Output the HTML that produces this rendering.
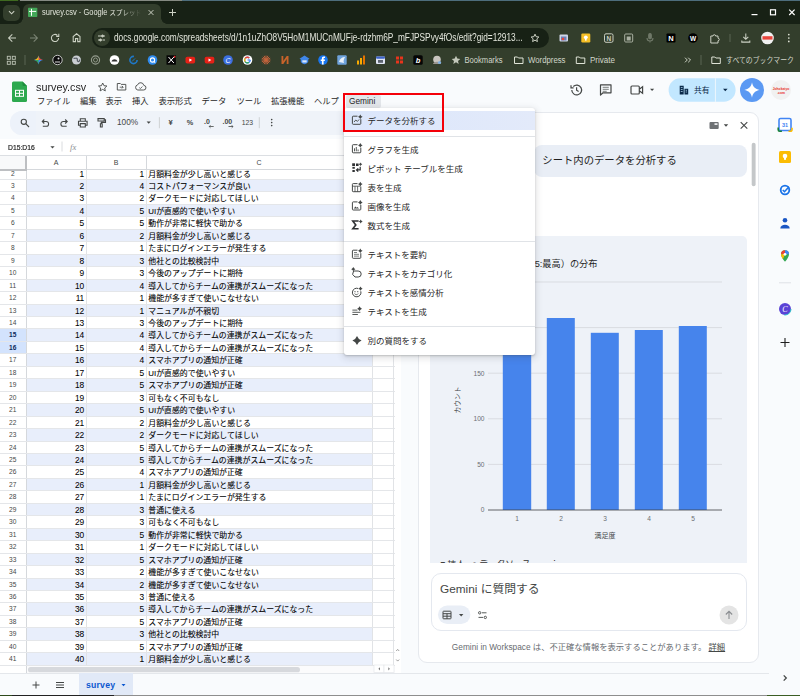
<!DOCTYPE html>
<html lang="ja">
<head>
<meta charset="utf-8">
<title>survey.csv - Google スプレッドシート</title>
<style>
*{box-sizing:border-box;margin:0;padding:0}
html,body{width:800px;height:696px;overflow:hidden;background:#f9fbfd}
body{font-family:"Liberation Sans","Noto Sans CJK JP",sans-serif;color:#1f1f1f;position:relative}
.abs{position:absolute}
svg{display:block;overflow:visible}
/* ---------- browser chrome ---------- */
#chrome{position:absolute;left:0;top:0;width:800px;height:72px;background:#333e2c}
#tabstrip{position:absolute;left:0;top:0;width:800px;height:24px;background:#172115}
#topline{position:absolute;left:0;top:0;width:800px;height:1px;background:linear-gradient(90deg,#3f6a20 0,#3f6a20 18px,#1f2a19 18px,#1f2a19 20px,#858a82 20px,#858a82 182px,#4d6d7c 182px)}
#tabsearch{position:absolute;left:3px;top:4.5px;width:16.5px;height:16px;border-radius:5px;background:#333e2c}
#tab{position:absolute;left:23px;top:4px;width:138px;height:20px;background:#333e2c;border-radius:6px 6px 0 0}
#tab:before,#tab:after{content:"";position:absolute;bottom:0;width:6px;height:6px;background:radial-gradient(circle at 0 0,transparent 5.5px,#333e2c 6px)}
#tab:before{left:-6px}
#tab:after{right:-6px;background:radial-gradient(circle at 100% 0,transparent 5.5px,#333e2c 6px)}
#tabtitle{position:absolute;left:42px;top:6px;width:114px;height:12px;transform:scaleX(0.87);transform-origin:0 0;font-size:8.6px;line-height:12px;color:#e3e6dc;white-space:nowrap;overflow:hidden;-webkit-mask-image:linear-gradient(90deg,#000 80%,transparent 100%)}
#omni{position:absolute;left:92px;top:28px;width:456.5px;height:20px;border-radius:10px;background:#172115}
#omnichip{position:absolute;left:93.5px;top:30px;width:16px;height:16px;border-radius:8px;background:#333e2c}
#url{position:absolute;left:114px;top:31px;font-size:10.2px;line-height:14px;color:#e3e6dc;white-space:nowrap;transform:scaleX(0.814);transform-origin:0 0}
.bm{position:absolute;top:54px;font-size:8.3px;line-height:12px;color:#dfe3d6;white-space:nowrap}
/* ---------- sheets header ---------- */
#title{position:absolute;left:36px;top:78.5px;font-size:11.8px;line-height:16px;transform:scaleX(0.915);transform-origin:0 0;color:#1f1f1f;white-space:nowrap}
.menu{position:absolute;top:94.5px;font-size:8.3px;line-height:13px;color:#1f1f1f;white-space:nowrap}
#gembtn{position:absolute;left:346px;top:95px;width:35px;height:12.5px;background:#e3e6ea;border-radius:2px}
#toolbar{position:absolute;left:9.5px;top:111px;width:396px;height:23.5px;background:#eff3f9;border-radius:12px}
#tbsearch{position:absolute;left:9.5px;top:111px;width:26px;height:23.5px;background:#edf2fa;border-radius:12px 0 0 12px}
.tbt{position:absolute;font-size:8.2px;line-height:12px;color:#444746;white-space:nowrap}
#fbar{position:absolute;left:0;top:138.5px;width:395px;height:17.5px;background:#fff;border-bottom:1px solid #dcdfe3}
#namebox{position:absolute;left:8px;top:141.5px;transform:scaleX(0.88);transform-origin:0 0;font-size:7.7px;-webkit-text-stroke:0.2px #1f1f1f;line-height:11px;color:#1f1f1f;white-space:nowrap}
/* ---------- grid ---------- */
#grid{position:absolute;left:0;top:156px;width:395px;height:510px;background:#fff;overflow:hidden}
#colhdr{position:absolute;left:0;top:156px;width:395px;height:14px;background:#fff;border-bottom:1px solid #d5d8dc}
.ch{position:absolute;top:0;height:14px;font-size:7px;line-height:14px;text-align:center;color:#444746;border-right:1px solid #d5d8dc}
#corner{position:absolute;left:0;top:156px;width:26.5px;height:14.5px;background:#f8f9fa;border-right:2px solid #bdbfc2;border-bottom:2px solid #bdbfc2}
.r{position:absolute;left:0;width:394.5px;height:12.455px;font-size:7.9px;line-height:13.4px;color:#000;white-space:nowrap;border-bottom:1px solid #e4e6e9}
.r.band{background:linear-gradient(90deg,#fff 0,#fff 26.5px,#e8eefb 26.5px,#e8eefb 372.8px,#fff 372.8px)}
.r span{position:absolute;top:0;height:100%}
.rh{left:0;width:26.5px;text-align:center;font-size:6.6px;line-height:11.8px;color:#444746;border-right:1px solid #d5d8dc;background:#fff}
.sel .rh{background:#d3e3fd;font-weight:bold;color:#0b2a5c}
.ca{left:26.5px;width:60px;text-align:right;padding-right:1.8px;border-right:1px solid #e1e3e6}
.cb{left:86.5px;width:60px;text-align:right;padding-right:1.8px;border-right:1px solid #e1e3e6}
.cc{left:146.5px;width:226.3px;padding-left:1.8px;border-right:1px solid #e1e3e6;-webkit-text-stroke:0.08px #000}
.ca,.cb{-webkit-text-stroke:0.05px #000;font-size:8.4px;letter-spacing:-0.35px;line-height:12.9px}
#cold{position:absolute;left:372.8px;top:170px;width:21.6px;height:496px;border-right:1px solid #e1e3e6}
/* ---------- bottom ---------- */
#vscroll{position:absolute;left:394.5px;top:156px;width:6.2px;height:517px;background:#fff}
#hscroll{position:absolute;left:0;top:665.5px;width:395px;height:7.5px;background:linear-gradient(90deg,#fff 0,#fff 26px,#d5d8dc 26px,#d5d8dc 27px,#fbfbfc 27px)}
#bottombar{position:absolute;left:0;top:673px;width:769px;height:23px;background:#f9fbfd;border-top:1px solid #e4e7eb}
#botline{position:absolute;left:0;top:694.6px;width:800px;height:1.4px;background:linear-gradient(90deg,#2e4a1c 0,#2e4a1c 12px,#222 12px,#222 114px,#8e8e8e 114px,#8e8e8e 767px,#3c5e24 767px)}
#sheettab{position:absolute;left:79px;top:673px;width:54px;height:22px;background:#e1e9f7}
/* ---------- dropdown ---------- */
#dd{position:absolute;left:344px;top:108px;width:190.5px;height:247px;background:#fff;border-radius:3px;box-shadow:0 1px 2px rgba(60,64,67,.26),0 2px 6px 2px rgba(60,64,67,.13)}
.mi{position:absolute;left:0;width:190.5px;height:19px;font-size:8.5px;line-height:19px;color:#1f1f1f;white-space:nowrap;padding-left:23.5px}
.mi.hl{background:linear-gradient(90deg,#dbe6fb,#e3eafa)}
.msep{position:absolute;left:0;width:190.5px;height:1px;background:#e0e3e7}
.mic{position:absolute;left:8px;top:4.5px;width:10px;height:10px}
#redbox{position:absolute;left:343px;top:93px;width:101px;height:39px;border:2px solid #f40009}
/* ---------- side panel ---------- */
#card{position:absolute;left:417.5px;top:111.5px;width:341px;height:551px;background:#fff;border:1px solid #e6e9ee;border-radius:9px;overflow:hidden}
#bubble{position:absolute;left:534px;top:144.5px;width:213px;height:32px;background:#e9eef6;border-radius:8px}
#bubbletxt{position:absolute;left:542.3px;top:153px;font-size:10.35px;line-height:16px;color:#1f1f1f;white-space:nowrap}
#resp{position:absolute;left:430px;top:235.5px;width:317px;height:327px;background:#eef2f8;border-radius:5px 5px 0 0}
#cliptxt{position:absolute;left:440px;top:560.3px;width:130px;height:2.4px;overflow:hidden;font-size:8.6px;line-height:9px;color:#333;white-space:nowrap}
#inputbox{position:absolute;left:430.5px;top:572.7px;width:316.5px;height:58.6px;border:1px solid #e4e8ef;border-radius:10px;background:#fff}
#ask{position:absolute;left:440px;top:580.5px;font-size:11.8px;line-height:16px;color:#444746;white-space:nowrap}
#foot{position:absolute;left:418px;top:641px;width:341px;text-align:center;font-size:8.3px;line-height:12px;color:#676b70;white-space:nowrap}
#foot u{color:#444746}
</style>
</head>
<body>
<!-- ======= browser chrome ======= -->
<div id="chrome">
  <div id="tabstrip"></div>
  <div id="topline"></div>
  <div id="tabsearch"></div>
  <div id="tab"></div>
  <div id="tabtitle">survey.csv - Google <span style="font-size:7.4px">スプレッドシート</span></div>
  <div id="omni"></div>
  <div id="omnichip"></div>
  <div id="url">docs.google.com/spreadsheets/d/1n1uZhO8V5HoM1MUCnMUFje-rdzhm6P_mFJPSPvy4fOs/edit?gid=12913...</div>
  <svg class="abs" style="left:0;top:0" width="800" height="72" viewBox="0 0 800 72" font-family="'Liberation Sans','Noto Sans CJK JP',sans-serif">
<!-- tab strip -->
<path d="M9 11.2l2.6 2.6 2.6-2.6" fill="none" stroke="#ccd1c4" stroke-width="1.1"/>
<rect x="28" y="7.8" width="9.3" height="9.3" rx="0.8" fill="#43a758"/>
<path d="M29 11.400h7.200M31.500 8.800v7" stroke="#fff" stroke-width="1"/>
<path d="M148.6 10.1l4.8 4.8M153.4 10.1l-4.8 4.8" stroke="#ccd1c4" stroke-width="1"/>
<path d="M169 12.5h7M172.5 9v7" stroke="#ccd1c4" stroke-width="1"/>
<path d="M751.5 14.6h6" stroke="#fff" stroke-width="1.2"/>
<rect x="770.5" y="9.8" width="5" height="5" fill="none" stroke="#fff" stroke-width="1.2"/>
<path d="M789.2 9.6l5.4 5.4M794.6 9.6l-5.4 5.4" stroke="#fff" stroke-width="1.2"/>
<!-- nav -->
<g fill="none" stroke="#ccd1c4" stroke-width="1.05">
<path d="M16 38h-7.2M12.3 34.3L8.6 38l3.7 3.7"/>
<path d="M30 38h7.2M33.7 34.3l3.7 3.7-3.7 3.7" stroke="#7d8676"/>
<path d="M58.6 38a3.6 3.6 0 1 1-1.2-2.7M58.8 33.8v2.6h-2.6"/>
<path d="M73.2 41.6v-5l3.4-2.8 3.4 2.8v5h-2.3v-3h-2.2v3z"/>
</g>
<!-- site chip -->
<g stroke="#ccd1c4" stroke-width="1" fill="none" transform="translate(-1.5,0)">
<path d="M99.5 36h3M105 36h1.5M99.5 40h1.5M104 40h2.5"/>
<circle cx="104" cy="36" r="1" fill="#ccd1c4"/><circle cx="102" cy="40" r="1" fill="#ccd1c4"/>
</g>
<!-- star -->
<path d="M535 34.2l1.15 2.5 2.7.3-2 1.85.55 2.7-2.4-1.4-2.4 1.4.55-2.7-2-1.85 2.7-.3z" fill="none" stroke="#dfe3d6" stroke-width="0.9" stroke-linejoin="round"/>
<!-- extensions -->
<rect x="559.5" y="34.5" width="8.5" height="7" rx="1" fill="#cfd6e6"/><rect x="561" y="36.5" width="5.5" height="4" fill="#6b7fb5"/><circle cx="563" cy="39" r="1.3" fill="#ea4335"/>
<rect x="581.3" y="33.5" width="9" height="9" rx="1.2" fill="#f6bf26"/><circle cx="585.8" cy="37.3" r="1.9" fill="#fff"/><rect x="585" y="39" width="1.6" height="1.6" fill="#fff"/>
<rect x="604.5" y="33.8" width="8.5" height="8.5" rx="1.5" fill="none" stroke="#c9cec1" stroke-width="1"/><text x="608.8" y="40.6" font-size="6.5" font-weight="bold" fill="#c9cec1" text-anchor="middle">N</text>
<rect x="624.7" y="34" width="8" height="8" rx="1" fill="none" stroke="#aab0a2" stroke-width="1"/><rect x="626.7" y="36.5" width="4" height="4" fill="#aab0a2"/>
<g fill="none" stroke="#6f7868" stroke-width="1.1"><rect x="648.7" y="33.6" width="2.6" height="5.2" rx="1.3" fill="#6f7868"/><path d="M647 38a3 3 0 0 0 6 0M650 41v1.6"/></g>
<rect x="666.5" y="33.5" width="9" height="9" rx="0.8" fill="#000"/><text x="671" y="41" font-size="7.5" font-weight="bold" fill="#fff" text-anchor="middle">N</text>
<circle cx="693" cy="38" r="4.8" fill="#000"/><text x="693" y="40.6" font-size="6.5" font-weight="bold" fill="#fff" text-anchor="middle">W</text>
<path d="M710.8 36h2.2a1.3 1.3 0 1 1 2.600 0h2.4v2.200a1.300 1.300 0 1 1 0 2.600v2.200h-7.200z" fill="none" stroke="#ccd1c4" stroke-width="1" stroke-linejoin="round"/>
<path d="M730 34v8" stroke="#5b6453" stroke-width="1"/>
<path d="M745.8 33.6v5.4M743.3 36.8l2.5 2.5 2.5-2.5M741.8 40.4v1.7h8v-1.7" fill="none" stroke="#ccd1c4" stroke-width="1.05"/>
<circle cx="767.5" cy="38" r="6.3" fill="#f1f1f1"/><rect x="762.5" y="36.2" width="10" height="3.4" fill="#e8453c"/>
<circle cx="788.8" cy="34.6" r="0.85" fill="#dfe3d6"/><circle cx="788.8" cy="38" r="0.85" fill="#dfe3d6"/><circle cx="788.8" cy="41.4" r="0.85" fill="#dfe3d6"/>
<!-- bookmarks bar -->
<g fill="none" stroke="#bcc2b4" stroke-width="0.9"><rect x="7.3" y="56.3" width="3" height="3"/><rect x="12.3" y="56.3" width="3" height="3"/><rect x="7.3" y="61.3" width="3" height="3"/><rect x="12.3" y="61.3" width="3" height="3"/></g>
<path d="M25 55v10" stroke="#5b6453" stroke-width="1"/>
<path d="M38.5 55.5c.4 2.6 1.9 4.1 4.5 4.5-2.600.4-4.100 1.900-4.500 4.500-.4-2.600-1.900-4.100-4.500-4.500 2.600-.4 4.100-1.900 4.500-4.500z" fill="#4285f4"/>
<path d="M38.5 55.5c.4 2.600 1.900 4.100 4.500 4.500h-4.500z" fill="#ea4335"/><path d="M34 60c2.600.4 4.100 1.900 4.500 4.500v-4.500z" fill="#34a853"/><path d="M34 60c2.600-.4 4.100-1.900 4.500-4.500v4.500z" fill="#fbbc04"/>
<circle cx="57.500" cy="60" r="4.700" fill="#0b0b0b" stroke="#e8e8e8" stroke-width="0.8"/><rect x="55" y="61.500" width="5" height="1" fill="#ddd"/><circle cx="58.500" cy="58.500" r="1" fill="#ddd"/>
<circle cx="76.500" cy="60" r="4.500" fill="#c9cdd2"/><path d="M73.500 58c1.500 1 2.500-.5 3.500.5s-.5 2.500 1 3 1.500-1 2-2" fill="none" stroke="#555b63" stroke-width="1.200"/>
<circle cx="95.500" cy="60" r="4.100" fill="none" stroke="#969d8f" stroke-width="1.100"/><circle cx="95.500" cy="60" r="2" fill="none" stroke="#969d8f" stroke-width="0.900"/>
<circle cx="114.500" cy="60" r="4.800" fill="#fff"/><path d="M111.500 61.500c1-3 5-3 6 0z" fill="#333"/>
<circle cx="133.500" cy="60" r="3.600" fill="none" stroke="#1f78c8" stroke-width="1.600" stroke-dasharray="17 5"/><path d="M132 61.500l3-3" stroke="#1f78c8" stroke-width="1"/>
<circle cx="152.500" cy="60" r="4.800" fill="#2f8cf0"/><circle cx="152.500" cy="60" r="2.100" fill="none" stroke="#fff" stroke-width="1.100"/><path d="M153.800 61.300l1.400 1.400" stroke="#fff" stroke-width="1.100"/>
<rect x="166.500" y="55.300" width="9.400" height="9.400" fill="#050505"/><path d="M168.500 57l5.400 6M173.900 57l-5.400 6" stroke="#fff" stroke-width="1"/><circle cx="174.600" cy="56.800" r="1" fill="#e33"/>
<rect x="185.500" y="56.700" width="9.600" height="6.800" rx="1.800" fill="#e62117"/><path d="M189.300 58.400l2.800 1.700-2.800 1.700z" fill="#fff"/>
<rect x="204.700" y="56.700" width="9.600" height="6.800" rx="1.800" fill="#e62117"/><path d="M208.500 58.400l2.800 1.700-2.800 1.700z" fill="#fff"/>
<circle cx="228" cy="60" r="4.800" fill="#3b6fe0"/><text x="228" y="62.600" font-size="7" font-style="italic" fill="#fff" text-anchor="middle">C</text>
<circle cx="247.500" cy="60" r="4.800" fill="#fff"/><path d="M250.200 60a2.800 2.800 0 1 1-.9-2" fill="none" stroke="#4285f4" stroke-width="1.300"/><path d="M247.500 60h2.800" stroke="#4285f4" stroke-width="1.200"/><path d="M245.300 58.200a2.800 2.800 0 0 1 4-.2" fill="none" stroke="#ea4335" stroke-width="1.300"/><path d="M245.300 61.800a2.800 2.800 0 0 1 0-3.600" fill="none" stroke="#fbbc04" stroke-width="1.300"/><path d="M245.300 61.800a2.800 2.800 0 0 0 3.600.6" fill="none" stroke="#34a853" stroke-width="1.300"/>
<g stroke="#c8643c" stroke-width="0.9"><path d="M266 55.500v9M261.500 60h9M262.800 56.800l6.400 6.400M269.200 56.800l-6.400 6.400M264.200 55.800l3.600 8.400M267.800 55.800l-3.600 8.400M261.800 58.200l8.400 3.600M261.800 61.800l8.400-3.600"/></g>
<path d="M281.500 64v-8l1.800 0v5l3.400-5h1.800v8h-1.800v-5l-3.400 5z" fill="#c8632a"/>
<path d="M304.500 55.500l5 3.200-1.300.8v2.500c-1 1.300-2.300 2-3.700 2.200-1.400-.2-2.700-.9-3.700-2.200v-2.500l-1.300-.8z" fill="#3f86e8"/><path d="M302.300 60.300h4.400v2.200h-4.400z" fill="#d7e6fb"/>
<circle cx="323" cy="60" r="4.800" fill="#1877f2"/><path d="M323.600 64.600v-3.600h1.200l.2-1.500h-1.400v-.9c0-.5.200-.7.700-.7h.7v-1.300c-.3 0-.7-.1-1.200-.1-1.200 0-1.900.7-1.900 1.900v1.100h-1.200v1.500h1.200v3.600z" fill="#fff"/>
<rect x="337.300" y="55.300" width="9.400" height="9.400" rx="1" fill="#6fa3dc"/><path d="M339 62c1-4 4-5 6-5-1 2-2 4-1 6z" fill="#e9f1fb"/>
<rect x="357" y="60.500" width="2" height="4" fill="#f9ab00"/><rect x="360" y="58" width="2" height="6.500" fill="#f9ab00"/><rect x="363" y="55.500" width="2" height="9" fill="#e37400"/>
<rect x="376" y="56.500" width="9" height="7.500" rx="1" fill="#dfe5f2"/><rect x="376" y="56.500" width="9" height="2.200" rx="1" fill="#3d63c9"/><rect x="378" y="60" width="5" height="2.800" fill="#5c6470"/>
<rect x="396" y="56.500" width="3" height="3" fill="#e8341c"/><rect x="400" y="56.500" width="3" height="3" fill="#e8341c"/><rect x="396" y="60.500" width="3" height="3" fill="#e8341c"/><rect x="400" y="60.500" width="3" height="3" fill="#e8341c"/>
<rect x="413.300" y="55.300" width="9.400" height="9.400" rx="1.500" fill="#050505"/><text x="418" y="63" font-size="7.500" font-weight="bold" font-style="italic" fill="#fff" text-anchor="middle">b</text>
<circle cx="437" cy="59.500" r="3.800" fill="#c9c5c0"/><path d="M433 64c0-3 8-3 8 0z" fill="#9a958f"/><circle cx="439.500" cy="62.500" r="1.600" fill="#7fb0e0"/>
<path d="M456 55.800l1.300 2.800 3 .3-2.300 2 .7 3-2.700-1.600-2.700 1.600.7-3-2.300-2 3-.3z" fill="#c3c8bb"/>
<text x="464.500" y="63" font-size="8.300" fill="#d2d7ca" textLength="38" lengthAdjust="spacingAndGlyphs">Bookmarks</text>
<path d="M514.500 57h3l1 1h4.500v5.500h-8.500z" fill="none" stroke="#dfe3d6" stroke-width="1"/>
<text x="528" y="63" font-size="8.300" fill="#d2d7ca" textLength="37.5" lengthAdjust="spacingAndGlyphs">Wordpress</text>
<path d="M576.300 57h3l1 1h4.500v5.500h-8.500z" fill="none" stroke="#dfe3d6" stroke-width="1"/>
<text x="590" y="63" font-size="8.300" fill="#d2d7ca" textLength="25" lengthAdjust="spacingAndGlyphs">Private</text>
<path d="M685 57.700l2.300 2.300-2.300 2.300M688.200 57.700l2.300 2.300-2.300 2.300" fill="none" stroke="#dfe3d6" stroke-width="0.9"/>
<path d="M701 55v10" stroke="#5b6453" stroke-width="1"/>
<path d="M711.800 57h3l1 1h4.500v5.500h-8.500z" fill="none" stroke="#dfe3d6" stroke-width="1"/>
<text x="726" y="63" font-size="7.600" fill="#d2d7ca" textLength="68" lengthAdjust="spacingAndGlyphs">すべてのブックマーク</text>
</svg>
</div>

<!-- ======= sheets header ======= -->
<div id="title">survey.csv</div>
<div class="menu" style="left:37px">ファイル</div>
<div class="menu" style="left:80px">編集</div>
<div class="menu" style="left:105.5px">表示</div>
<div class="menu" style="left:132px">挿入</div>
<div class="menu" style="left:158.5px">表示形式</div>
<div class="menu" style="left:201.5px">データ</div>
<div class="menu" style="left:236.5px">ツール</div>
<div class="menu" style="left:271px">拡張機能</div>
<div class="menu" style="left:314px">ヘルプ</div>
<div id="toolbar"></div>
<div id="tbsearch"></div>
<div id="fbar"></div>
<div id="gembtn"></div>
<div class="menu" style="left:349px">Gemini</div>
<svg class="abs" style="left:0;top:72px" width="800" height="100" viewBox="0 72 800 100" font-family="'Liberation Sans','Noto Sans CJK JP',sans-serif">
<!-- doc icon -->
<path d="M13.5 81.500h9l4.500 4.500v14.500a1.500 1.500 0 0 1-1.500 1.500h-12a1.500 1.500 0 0 1-1.500-1.500v-17.500a1.500 1.500 0 0 1 1.500-1.500z" fill="#2da94f"/>
<path d="M22.500 81.500l4.500 4.500h-3.500a1 1 0 0 1-1-1z" fill="#1e8e3e"/>
<g fill="none" stroke="#fff" stroke-width="1"><rect x="15.500" y="90.300" width="8" height="6"/><path d="M15.500 93.300h8M19.500 90.300v6"/></g>
<!-- star / move / cloud -->
<path d="M102.700 83l1.250 2.700 2.950.3-2.200 2 .6 2.900-2.600-1.500-2.600 1.500.6-2.900-2.200-2 2.950-.3z" fill="none" stroke="#444746" stroke-width="0.9" stroke-linejoin="round"/>
<path d="M117.300 83.500h3l.9.900h4.600v5.600h-8.500z" fill="none" stroke="#444746" stroke-width="0.9"/><path d="M119.700 87.200h3.400M121.900 85.900l1.300 1.300-1.300 1.300" fill="none" stroke="#444746" stroke-width="0.8"/>
<path d="M137.800 90h5.700a2.300 2.300 0 0 0 .3-4.600 3.200 3.200 0 0 0-6.200-.5 2.600 2.600 0 0 0 .2 5.100z" fill="none" stroke="#444746" stroke-width="0.9"/><path d="M139.300 87.600l1.100 1 2-2.100" fill="none" stroke="#444746" stroke-width="0.8"/>
<!-- right header icons -->
<g fill="none" stroke="#444746" stroke-width="1.200">
<path d="M571.800 90a4.900 4.900 0 1 0 1.500-3.500M571 85.200v2.600h2.600M576.600 87.200v3l2 1.300"/>
<path d="M600.500 84.800h10.500v8h-8l-2.500 2.300z" stroke-linejoin="round"/><path d="M602.700 87.300h6.100M602.700 89.300h6.100M602.700 91.300h4" stroke-width="0.700"/>
<path d="M632 86h6.300a1 1 0 0 1 1 1v6a1 1 0 0 1-1 1h-6.300a1 1 0 0 1-1-1v-6a1 1 0 0 1 1-1zM639.300 89.200l3.300-2.400v6.400l-3.300-2.400"/>
</g>
<path d="M650 88.800h4.200l-2.100 2.300z" fill="#444746"/>
<rect x="668.600" y="78.300" width="67" height="23.500" rx="11.750" fill="#c2e7ff"/>
<path d="M715.400 78.300v23.500" stroke="#f9fbfd" stroke-width="0.800"/>
<path d="M679.700 85.800h4v8.600h-4zM684.500 88.700h3.700v5.700h-3.700z" fill="#0a2a4a"/><path d="M680.800 87.500h1.800M680.800 89.500h1.800M680.800 91.500h1.800M685.700 90.300h1.300M685.700 92h1.300" stroke="#c2e7ff" stroke-width="0.700"/>
<text x="694" y="93.200" font-size="7.800" fill="#0a2a4a">共有</text>
<path d="M723 88.800h4.600l-2.300 2.500z" fill="#0a2a4a"/>
<circle cx="752" cy="90" r="12" fill="#5b99f3"/>
<path d="M752 82.300c.7 4.400 3.300 7 7.700 7.700-4.400.7-7 3.300-7.700 7.700-.7-4.400-3.300-7-7.700-7.700 4.400-.7 7-3.300 7.700-7.700z" fill="#fff"/>
<circle cx="781" cy="90" r="10" fill="#f1f1f1"/>
<text x="781" y="89.500" font-size="3.300" font-weight="bold" fill="#e8302a" text-anchor="middle">Johokatyo</text>
<text x="781" y="93.500" font-size="3.300" font-weight="bold" fill="#e8302a" text-anchor="middle">.com</text>
<!-- toolbar icons -->
<g fill="none" stroke="#444746" stroke-width="1.100">
<circle cx="23.800" cy="121.800" r="2.600"/><path d="M25.700 123.700l3.300 3.300"/>
<path d="M42.800 126.300h3.400a2.400 2.400 0 0 0 0-4.800h-3.600M44.300 119.500l-2 2 2 2"/>
<path d="M66.700 126.300h-3.400a2.400 2.400 0 0 1 0-4.800h3.600M65.200 119.500l2 2-2 2"/>
<path d="M80.300 121.200v-2.400h5v2.400M80.300 125.300h-1.800v-4.100h8.600v4.100h-1.800M80.300 123.600h5v3.400h-5z"/>
<path d="M98 118.600h6.200v2.400h-6.200zM104.200 119.800h1.300v2.600h-4.200v1.400M100.400 123.800h1.800v3.200h-1.800z"/>
</g>
<text x="117" y="125.300" font-size="8.300" fill="#444746" font-weight="500">100%</text>
<path d="M146.600 121.500h4.200l-2.100 2.300z" fill="#444746"/>
<path d="M159.400 117.200v11" stroke="#c7c9cc" stroke-width="0.800"/>
<text x="170.600" y="125" font-size="7.600" fill="#444746" text-anchor="middle" font-weight="bold">¥</text>
<text x="190" y="125" font-size="7.300" fill="#444746" text-anchor="middle" font-weight="bold">%</text>
<text x="204" y="124" font-size="7" fill="#444746" font-weight="bold">.0</text><path d="M213.700 126.500h-4.500M210.500 125.200l-1.300 1.300 1.300 1.300" fill="none" stroke="#444746" stroke-width="0.800"/>
<text x="222.500" y="124" font-size="7" fill="#444746" font-weight="bold">.00</text><path d="M228.500 126.500h4.500M231.700 125.200l1.300 1.300-1.300 1.300" fill="none" stroke="#444746" stroke-width="0.800"/>
<text x="247.300" y="125" font-size="6.800" fill="#444746" text-anchor="middle">123</text>
<path d="M259.300 117.200v11" stroke="#c7c9cc" stroke-width="0.800"/>
<circle cx="271.700" cy="119.600" r="0.800" fill="#444746"/><circle cx="271.700" cy="122.600" r="0.800" fill="#444746"/><circle cx="271.700" cy="125.600" r="0.800" fill="#444746"/>
<!-- formula bar -->
<path d="M50.400 146.300h4.200l-2.100 2.300z" fill="#444746"/>
<path d="M62 141.500v10" stroke="#d0d3d7" stroke-width="0.800"/>
<text x="70" y="150.300" font-size="8.600" font-style="italic" fill="#8a8d91" font-family="'Liberation Serif',serif">fx</text>
</svg>

<div id="namebox">D15:D16</div>

<!-- ======= grid ======= -->
<div id="grid"></div>
<div class="r" style="top:167.54px"><span class="rh">2</span><span class="ca">1</span><span class="cb">1</span><span class="cc">月額料金が少し高いと感じる</span></div>
<div class="r band" style="top:180.00px"><span class="rh">3</span><span class="ca">2</span><span class="cb">4</span><span class="cc">コストパフォーマンスが良い</span></div>
<div class="r" style="top:192.46px"><span class="rh">4</span><span class="ca">3</span><span class="cb">2</span><span class="cc">ダークモードに対応してほしい</span></div>
<div class="r band" style="top:204.91px"><span class="rh">5</span><span class="ca">4</span><span class="cb">5</span><span class="cc">UIが直感的で使いやすい</span></div>
<div class="r" style="top:217.37px"><span class="rh">6</span><span class="ca">5</span><span class="cb">5</span><span class="cc">動作が非常に軽快で助かる</span></div>
<div class="r band" style="top:229.82px"><span class="rh">7</span><span class="ca">6</span><span class="cb">2</span><span class="cc">月額料金が少し高いと感じる</span></div>
<div class="r" style="top:242.28px"><span class="rh">8</span><span class="ca">7</span><span class="cb">1</span><span class="cc">たまにログインエラーが発生する</span></div>
<div class="r band" style="top:254.73px"><span class="rh">9</span><span class="ca">8</span><span class="cb">3</span><span class="cc">他社との比較検討中</span></div>
<div class="r" style="top:267.19px"><span class="rh">10</span><span class="ca">9</span><span class="cb">3</span><span class="cc">今後のアップデートに期待</span></div>
<div class="r band" style="top:279.64px"><span class="rh">11</span><span class="ca">10</span><span class="cb">4</span><span class="cc">導入してからチームの連携がスムーズになった</span></div>
<div class="r" style="top:292.10px"><span class="rh">12</span><span class="ca">11</span><span class="cb">1</span><span class="cc">機能が多すぎて使いこなせない</span></div>
<div class="r band" style="top:304.55px"><span class="rh">13</span><span class="ca">12</span><span class="cb">1</span><span class="cc">マニュアルが不親切</span></div>
<div class="r" style="top:317.00px"><span class="rh">14</span><span class="ca">13</span><span class="cb">3</span><span class="cc">今後のアップデートに期待</span></div>
<div class="r band sel" style="top:329.46px"><span class="rh">15</span><span class="ca">14</span><span class="cb">4</span><span class="cc">導入してからチームの連携がスムーズになった</span></div>
<div class="r sel" style="top:341.91px"><span class="rh">16</span><span class="ca">15</span><span class="cb">4</span><span class="cc">導入してからチームの連携がスムーズになった</span></div>
<div class="r band" style="top:354.37px"><span class="rh">17</span><span class="ca">16</span><span class="cb">4</span><span class="cc">スマホアプリの通知が正確</span></div>
<div class="r" style="top:366.82px"><span class="rh">18</span><span class="ca">17</span><span class="cb">5</span><span class="cc">UIが直感的で使いやすい</span></div>
<div class="r band" style="top:379.28px"><span class="rh">19</span><span class="ca">18</span><span class="cb">5</span><span class="cc">スマホアプリの通知が正確</span></div>
<div class="r" style="top:391.74px"><span class="rh">20</span><span class="ca">19</span><span class="cb">3</span><span class="cc">可もなく不可もなし</span></div>
<div class="r band" style="top:404.19px"><span class="rh">21</span><span class="ca">20</span><span class="cb">5</span><span class="cc">UIが直感的で使いやすい</span></div>
<div class="r" style="top:416.64px"><span class="rh">22</span><span class="ca">21</span><span class="cb">2</span><span class="cc">月額料金が少し高いと感じる</span></div>
<div class="r band" style="top:429.10px"><span class="rh">23</span><span class="ca">22</span><span class="cb">2</span><span class="cc">ダークモードに対応してほしい</span></div>
<div class="r" style="top:441.56px"><span class="rh">24</span><span class="ca">23</span><span class="cb">5</span><span class="cc">導入してからチームの連携がスムーズになった</span></div>
<div class="r band" style="top:454.01px"><span class="rh">25</span><span class="ca">24</span><span class="cb">5</span><span class="cc">導入してからチームの連携がスムーズになった</span></div>
<div class="r" style="top:466.46px"><span class="rh">26</span><span class="ca">25</span><span class="cb">4</span><span class="cc">スマホアプリの通知が正確</span></div>
<div class="r band" style="top:478.92px"><span class="rh">27</span><span class="ca">26</span><span class="cb">1</span><span class="cc">月額料金が少し高いと感じる</span></div>
<div class="r" style="top:491.38px"><span class="rh">28</span><span class="ca">27</span><span class="cb">1</span><span class="cc">たまにログインエラーが発生する</span></div>
<div class="r band" style="top:503.83px"><span class="rh">29</span><span class="ca">28</span><span class="cb">3</span><span class="cc">普通に使える</span></div>
<div class="r" style="top:516.29px"><span class="rh">30</span><span class="ca">29</span><span class="cb">3</span><span class="cc">可もなく不可もなし</span></div>
<div class="r band" style="top:528.74px"><span class="rh">31</span><span class="ca">30</span><span class="cb">5</span><span class="cc">動作が非常に軽快で助かる</span></div>
<div class="r" style="top:541.19px"><span class="rh">32</span><span class="ca">31</span><span class="cb">1</span><span class="cc">ダークモードに対応してほしい</span></div>
<div class="r band" style="top:553.65px"><span class="rh">33</span><span class="ca">32</span><span class="cb">5</span><span class="cc">スマホアプリの通知が正確</span></div>
<div class="r" style="top:566.11px"><span class="rh">34</span><span class="ca">33</span><span class="cb">2</span><span class="cc">機能が多すぎて使いこなせない</span></div>
<div class="r band" style="top:578.56px"><span class="rh">35</span><span class="ca">34</span><span class="cb">2</span><span class="cc">機能が多すぎて使いこなせない</span></div>
<div class="r" style="top:591.01px"><span class="rh">36</span><span class="ca">35</span><span class="cb">3</span><span class="cc">普通に使える</span></div>
<div class="r band" style="top:603.47px"><span class="rh">37</span><span class="ca">36</span><span class="cb">5</span><span class="cc">導入してからチームの連携がスムーズになった</span></div>
<div class="r" style="top:615.92px"><span class="rh">38</span><span class="ca">37</span><span class="cb">5</span><span class="cc">スマホアプリの通知が正確</span></div>
<div class="r band" style="top:628.38px"><span class="rh">39</span><span class="ca">38</span><span class="cb">3</span><span class="cc">他社との比較検討中</span></div>
<div class="r" style="top:640.84px"><span class="rh">40</span><span class="ca">39</span><span class="cb">5</span><span class="cc">スマホアプリの通知が正確</span></div>
<div class="r band" style="top:653.29px"><span class="rh">41</span><span class="ca">40</span><span class="cb">1</span><span class="cc">月額料金が少し高いと感じる</span></div>
<div id="cold"></div>
<div id="colhdr">
  <div class="ch" style="left:26.5px;width:60px">A</div>
  <div class="ch" style="left:86.5px;width:60px">B</div>
  <div class="ch" style="left:146.5px;width:226.3px">C</div>
  <div class="ch" style="left:372.8px;width:21.6px"></div>
</div>
<div id="corner"></div>

<div id="vscroll"></div>
<div id="hscroll"></div>
<div id="bottombar"></div>
<div id="sheettab"></div>
<div id="botline"></div>

<!-- ======= side panel ======= -->
<div id="card"></div>
<div id="bubble"></div>
<div id="bubbletxt">シート内のデータを分析する</div>
<div id="resp"></div>
<svg class="abs" style="left:0;top:0" width="800" height="696" viewBox="0 0 800 696">
<g font-family="'Liberation Sans','Noto Sans CJK JP',sans-serif">
<text x="597.5" y="267" font-size="9.2" fill="#1f1f1f" text-anchor="end" id="ctitle">満足度（1:最低〜5:最高）の分布</text>
<g stroke="#d9dce1" stroke-width="1">
<line x1="488" x2="722" y1="282" y2="282"/>
<line x1="488" x2="722" y1="327.6" y2="327.6"/>
<line x1="488" x2="722" y1="373.2" y2="373.2"/>
<line x1="488" x2="722" y1="418.8" y2="418.8"/>
<line x1="488" x2="722" y1="464.4" y2="464.4"/>
</g>
<g fill="#4684ec">
<rect x="502.8" y="330" width="28.4" height="180"/>
<rect x="546.8" y="318" width="28" height="192"/>
<rect x="590.8" y="332.8" width="28" height="177.2"/>
<rect x="634.8" y="330" width="28" height="180"/>
<rect x="678.8" y="326" width="28" height="184"/>
</g>
<line x1="488" x2="722" y1="510" y2="510" stroke="#3c4043" stroke-width="0.8"/>
<g font-size="6.6" fill="#6b6f73" text-anchor="end">
<text x="484.5" y="375.6">150</text>
<text x="484.5" y="421.2">100</text>
<text x="484.5" y="466.8">50</text>
<text x="484.5" y="512.4">0</text>
</g>
<g font-size="6.6" fill="#6b6f73" text-anchor="middle">
<text x="517" y="520.5">1</text>
<text x="561" y="520.5">2</text>
<text x="605" y="520.5">3</text>
<text x="649" y="520.5">4</text>
<text x="693" y="520.5">5</text>
</g>
<text x="605" y="537.5" font-size="7" fill="#44474a" text-anchor="middle">満足度</text>
<text transform="translate(459.5,400) rotate(-90)" font-size="6.8" fill="#44474a" text-anchor="middle">カウント</text>
</g>
</svg>
<div id="cliptxt">■ 挿入&nbsp;&nbsp;&nbsp;○ データソース&nbsp;&nbsp;&nbsp;&nbsp;&nbsp;&nbsp;&nbsp;&nbsp;⋮</div>
<div id="inputbox"></div>
<div id="ask">Gemini に質問する</div>
<div id="foot">Gemini in Workspace は、不正確な情報を表示することがあります。 <u>詳細</u></div>
<svg class="abs" style="left:0;top:100px" width="800" height="596" viewBox="0 100 800 596" font-family="'Liberation Sans','Noto Sans CJK JP',sans-serif">
<!-- panel header -->
<rect x="709.500" y="122.100" width="9.200" height="6.800" rx="1" fill="#6e7174"/><rect x="714.500" y="123.200" width="3" height="1.800" fill="#e8e9ea"/>
<path d="M723.800 124.300h4.400l-2.200 2.400z" fill="#444746"/>
<path d="M740.700 122.100l6.600 6.600M747.300 122.100l-6.600 6.600" stroke="#444746" stroke-width="1.100"/>
<rect x="751.700" y="142.800" width="3.900" height="43.400" rx="1.950" fill="#c4c7c9"/>
<!-- clipped next line -->
<!-- input -->
<rect x="438" y="605.600" width="32.400" height="18.400" rx="9.200" fill="#e9eef6"/>
<g fill="none" stroke="#444746" stroke-width="1"><rect x="443" y="611.200" width="8" height="7.600" rx="0.600"/><path d="M443 613.700h8M443 616.200h8M447 613.700v5.100"/></g>
<path d="M459 614h4.400l-2.200 2.400z" fill="#444746"/>
<g fill="none" stroke="#444746" stroke-width="0.900"><circle cx="479.700" cy="612.800" r="1.200"/><path d="M482 612.800h4.500"/><circle cx="485.300" cy="617.400" r="1.200"/><path d="M478.500 617.400h4.500"/></g>
<circle cx="729" cy="615" r="9.500" fill="#e4e4e4"/>
<path d="M729 619v-7.500M725.800 614.500l3.200-3.200 3.200 3.200" fill="none" stroke="#8a8d91" stroke-width="1.100"/>
<!-- right rail -->
<rect x="779" y="118.500" width="12" height="12" rx="1.500" fill="#fff" stroke="#4285f4" stroke-width="1.600"/><path d="M778.200 127.500v2.200a1.500 1.500 0 0 0 1.500 1.500h2.200" fill="none" stroke="#188038" stroke-width="1.600"/><path d="M788.500 131.300h2a1.500 1.500 0 0 0 1.500-1.500v-2" fill="none" stroke="#fbbc04" stroke-width="1.600"/><text x="785" y="127.200" font-size="5.500" font-weight="bold" fill="#4285f4" text-anchor="middle">31</text>
<rect x="779" y="151" width="12" height="12" rx="1.500" fill="#fbbc04"/><circle cx="785" cy="156" r="2.300" fill="#fff"/><rect x="784" y="158" width="2" height="1.800" fill="#fff"/>
<circle cx="785" cy="190" r="4.300" fill="none" stroke="#1a73e8" stroke-width="1.800"/><path d="M782.800 190l1.700 1.700 4.500-5" fill="none" stroke="#1a73e8" stroke-width="1.600"/>
<circle cx="785" cy="220.300" r="2.300" fill="#1a56c4"/><path d="M780.300 228.500c0-5 9.400-5 9.400 0z" fill="#1a56c4"/>
<path d="M785 250.300a4 4 0 0 1 4 4c0 3-4 7.500-4 7.500s-4-4.500-4-7.500a4 4 0 0 1 4-4z" fill="#34a853"/><path d="M785 250.300a4 4 0 0 1 4 4h-4z" fill="#4285f4"/><path d="M781 254.300a4 4 0 0 1 4-4v4z" fill="#ea4335"/><path d="M781 254.300c0 1.500 1 3.300 2 4.800l2-4.800z" fill="#fbbc04"/><circle cx="785" cy="254.300" r="1.400" fill="#fff"/>
<path d="M779 282.800h12" stroke="#dfe2e6" stroke-width="1"/>
<circle cx="785" cy="309" r="6" fill="#5b43d6"/><circle cx="785" cy="309" r="6" fill="none" stroke="#27c2c8" stroke-width="1" stroke-dasharray="10 28"/><text x="785" y="312" font-size="8" font-style="italic" fill="#fff" text-anchor="middle" font-family="'Liberation Serif',serif">C</text>
<path d="M780.500 342.500h9M785 338v9" stroke="#1f1f1f" stroke-width="1.100"/>
<!-- bottom -->
<path d="M32.500 685h7M36 681.500v7" stroke="#444746" stroke-width="1"/>
<path d="M56 682.500h8M56 685h8M56 687.500h8" stroke="#444746" stroke-width="1"/>
<text x="86" y="688" font-size="8.700" font-weight="bold" fill="#0b57d0" letter-spacing="0.2">survey</text>
<path d="M121.500 684h4l-2 2.200z" fill="#0b57d0"/>
<path d="M783.700 675.400l2.600 2.600-2.600 2.600" fill="none" stroke="#444746" stroke-width="1.300"/>
<!-- scrollbars -->
<rect x="28" y="667.100" width="272" height="5.200" rx="2.600" fill="#d7d9dd"/>
<rect x="374" y="665" width="10" height="7.500" fill="#fff" stroke="#e1e3e6" stroke-width="0.600"/><rect x="384" y="665" width="10" height="7.500" fill="#fff" stroke="#e1e3e6" stroke-width="0.600"/>
<path d="M380 667.200l-1.600 1.600 1.600 1.600z" fill="#777"/><path d="M388.300 667.200l1.600 1.600-1.600 1.600z" fill="#777"/>
<path d="M396.200 651l1.500-1.600 1.500 1.600" fill="none" stroke="#777" stroke-width="0.700"/><path d="M396.200 659.500l1.500 1.600 1.500-1.600" fill="none" stroke="#777" stroke-width="0.700"/>
</svg>

<!-- ======= dropdown ======= -->
<div id="dd">
    <div class="mi hl" style="top:2.8px;line-height:20.4px">データを分析する</div>
  <div class="msep" style="top:28px"></div>
  <div class="mi" style="top:33px">グラフを生成</div>
  <div class="mi" style="top:52px">ピボット テーブルを生成</div>
  <div class="mi" style="top:71px">表を生成</div>
  <div class="mi" style="top:90px">画像を生成</div>
  <div class="mi" style="top:109px">数式を生成</div>
  <div class="msep" style="top:132.5px"></div>
  <div class="mi" style="top:138px">テキストを要約</div>
  <div class="mi" style="top:157px">テキストをカテゴリ化</div>
  <div class="mi" style="top:176px">テキストを感情分析</div>
  <div class="mi" style="top:195px">テキストを生成</div>
  <div class="msep" style="top:218px"></div>
  <div class="mi" style="top:224px">別の質問をする</div>
  <svg class="abs" style="left:0;top:-0.6px" width="190" height="247" viewBox="0 0 190 247"><path d="M13.5 9.2h-4.3a0.8 0.8 0 0 0-.8.800v6.500000000000002a0.8 0.8 0 0 0 .8.800h6.800a0.8 0.8 0 0 0 .8-.800v-4.300" fill="none" stroke="#444746" stroke-width="1"/><path d="M16.3 7.3999999999999995Q16.944 9.056 18.6 9.7Q16.944 10.344 16.3 12.0Q15.656 10.344 14.0 9.7Q15.656 9.056 16.3 7.3999999999999995z" fill="#444746"/><path d="M10 15l1.800-2 1.600 1.400 1.800-2" fill="none" stroke="#444746" stroke-width="0.900"/><path d="M13.5 37.7h-4.3a0.8 0.8 0 0 0-.8.800v6.499999999999995a0.8 0.8 0 0 0 .8.800h6.800a0.8 0.8 0 0 0 .8-.800v-4.300" fill="none" stroke="#444746" stroke-width="1"/><path d="M16.3 35.900000000000006Q16.944 37.556000000000004 18.6 38.2Q16.944 38.844 16.3 40.5Q15.656 38.844 14.0 38.2Q15.656 37.556000000000004 16.3 35.900000000000006z" fill="#444746"/><path d="M10.500 44.3v-3M12.300 44.3v-4.300M14.100 44.3v-1.800" stroke="#444746" stroke-width="0.900"/><rect x="8.200" y="56.300000000000004" width="2.800" height="2.800" fill="#2f3133"/><path d="M12 57.7h2.600M9.600 60.1v1.600M9.600 62.900000000000006v2.200" stroke="#2f3133" stroke-width="2.400"/><path d="M16.200 59.7v3.200h-3.400M14.200 61.300000000000004l-1.700 1.700 1.700 1.700" fill="none" stroke="#2f3133" stroke-width="1.200"/><path d="M16.5 55.50000000000001Q17.004 56.79600000000001 18.3 57.300000000000004Q17.004 57.804 16.5 59.1Q15.996 57.804 14.7 57.300000000000004Q15.996 56.79600000000001 16.5 55.50000000000001z" fill="#444746"/><path d="M13.5 76.60000000000001h-4.3a0.8 0.8 0 0 0-.8.800v6.499999999999995a0.8 0.8 0 0 0 .8.800h6.800a0.8 0.8 0 0 0 .8-.800v-4.300" fill="none" stroke="#444746" stroke-width="1"/><path d="M16.3 74.80000000000001Q16.944 76.456 18.6 77.10000000000001Q16.944 77.74400000000001 16.3 79.4Q15.656 77.74400000000001 14.0 77.10000000000001Q15.656 76.456 16.3 74.80000000000001z" fill="#444746"/><path d="M8.400 79.2h8M11 79.2v5.500M13.600 79.2v5.500" stroke="#444746" stroke-width="0.800"/><path d="M13.5 94.9h-4.3a0.8 0.8 0 0 0-.8.800v6.499999999999995a0.8 0.8 0 0 0 .8.800h6.800a0.8 0.8 0 0 0 .8-.800v-4.300" fill="none" stroke="#444746" stroke-width="1"/><path d="M16.3 93.10000000000001Q16.944 94.756 18.6 95.4Q16.944 96.04400000000001 16.3 97.7Q15.656 96.04400000000001 14.0 95.4Q15.656 94.756 16.3 93.10000000000001z" fill="#444746"/><path d="M9.800 101.5l1.600-2 1.200 1.300.9-.8 1.500 1.500z" fill="#444746"/><path d="M14.600 114.0h-5.800l3 3.900-3 3.900h5.800" fill="none" stroke="#2f3133" stroke-width="1.600"/><path d="M16.7 112.6Q17.259999999999998 114.03999999999999 18.7 114.6Q17.259999999999998 115.16 16.7 116.6Q16.14 115.16 14.7 114.6Q16.14 114.03999999999999 16.7 112.6z" fill="#444746"/><path d="M13.5 143.2h-4.3a0.8 0.8 0 0 0-.8.800v6.500000000000023a0.8 0.8 0 0 0 .8.800h6.800a0.8 0.8 0 0 0 .8-.800v-4.300" fill="none" stroke="#444746" stroke-width="1"/><path d="M16.3 141.39999999999998Q16.944 143.05599999999998 18.6 143.7Q16.944 144.344 16.3 146.0Q15.656 144.344 14.0 143.7Q15.656 143.05599999999998 16.3 141.39999999999998z" fill="#444746"/><path d="M10 145.5h3M10 147.3h5M10 149.1h5" stroke="#444746" stroke-width="0.700"/><path d="M9.600 164.0h4.600a3 3 0 0 1 0 6h-3.200l-2.400-2.600z" fill="none" stroke="#444746" stroke-width="1" stroke-linejoin="round"/><path d="M9.3 160.10000000000002Q9.888000000000002 161.61200000000002 11.4 162.20000000000002Q9.888000000000002 162.788 9.3 164.3Q8.712 162.788 7.200000000000001 162.20000000000002Q8.712 161.61200000000002 9.3 160.10000000000002z" fill="#444746"/><path d="M14.200 181.5a4.300 4.300 0 1 0 2.600 2.800" fill="none" stroke="#444746" stroke-width="1"/><circle cx="11" cy="184.7" r="0.600" fill="#444746"/><circle cx="13.800" cy="184.7" r="0.600" fill="#444746"/><path d="M10.600 186.5a2 2 0 0 0 3.600 0" fill="none" stroke="#444746" stroke-width="0.800"/><path d="M16.5 179.6Q17.088 181.112 18.6 181.7Q17.088 182.28799999999998 16.5 183.79999999999998Q15.911999999999999 182.28799999999998 14.4 181.7Q15.911999999999999 181.112 16.5 179.6z" fill="#444746"/><path d="M8.400 203.10000000000002h5M8.400 205.3h8M8.400 207.5h5.500" stroke="#444746" stroke-width="0.900"/><path d="M15.6 199.3Q16.272 201.02800000000002 18.0 201.70000000000002Q16.272 202.372 15.6 204.10000000000002Q14.927999999999999 202.372 13.2 201.70000000000002Q14.927999999999999 201.02800000000002 15.6 199.3z" fill="#444746"/><path d="M13 228.9Q14.288 232.212 17.6 233.5Q14.288 234.788 13 238.1Q11.712 234.788 8.4 233.5Q11.712 232.212 13 228.9z" fill="#444746"/></svg>
</div>
<div id="redbox"></div>
</body>
</html>
